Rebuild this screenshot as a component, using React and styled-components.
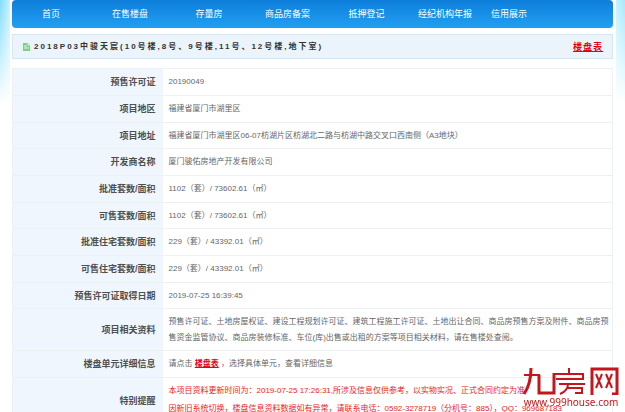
import React from 'react';
import styled, { createGlobalStyle } from 'styled-components';

const GlobalStyle = createGlobalStyle`
  * { box-sizing: border-box; }
  body {
    margin: 0;
    background: #fff;
    color: #666;
    font: 8px/16px "Liberation Sans", "Noto Sans CJK SC", sans-serif;
  }
`;

const Page = styled.div`
  height: 100vh;
  overflow: hidden;
  padding: 0 9px 0 10px;
  background:
    linear-gradient(to bottom, transparent, #fff 104px),
    linear-gradient(to right, #7fdcfb, #c5f3fe 10px, #c5f3fe calc(100% - 9px), #a5e9fd);
`;

const Sheet = styled.main`
  min-height: 100%;
  padding: 0 3px 0 2px;
  background: #fff;
`;

const NavList = styled.ul`
  display: flex;
  height: 28px;
  margin: 0;
  padding: 0;
  list-style: none;
  border-radius: 4px;
  background: linear-gradient(#0d7edb, #22a0f1);
`;

const NavItem = styled.li`
  flex: ${(p) => p.$share} 1 0;
  text-align: center;
`;

const NavLink = styled.a`
  color: #fff;
  font-size: 9px;
  line-height: 28px;
  text-decoration: none;
  white-space: nowrap;
`;

const TitleBar = styled.header`
  display: flex;
  align-items: center;
  height: 25px;
  margin: 6px 0 9px;
  padding: 0 9px 0 10px;
  border: 1px solid #d6e7f3;
  background: #ebf4fb;
`;

const Title = styled.h1`
  flex: 1;
  margin: 0 0 0 3px;
  color: #333;
  font-size: 8px;
  letter-spacing: 2px;
`;

const SheetLink = styled.a`
  color: #e60012;
  font-size: ${(p) => (p.$spaced ? '9px' : '8px')};
  font-weight: bold;
  letter-spacing: ${(p) => (p.$spaced ? '1px' : 'normal')};
`;

const Details = styled.table`
  width: 100%;
  border-collapse: collapse;
  border: 1px solid #eef1f4;
`;

const Row = styled.tr`
  height: 27px;
  border-top: 1px solid #eef1f4;
  &:nth-child(3n) { height: 26px; }
`;

const Label = styled.th`
  width: 25%;
  padding: 0 7px;
  background: #eff6fe;
  color: #505050;
  font-size: 9px;
  text-align: right;
`;

const Value = styled.td`
  padding: ${(p) => (p.$tall ? '5px 3px 4px 6px' : '0 3px 0 6px')};
`;

const Notice = styled.p`
  margin: 0 0 2px;
  color: #ee2222;
  white-space: nowrap;
`;

const Watermark = styled.aside`
  position: fixed;
  right: 5px;
  bottom: 3px;
  display: flex;
  flex-direction: column;
  align-items: center;
  color: #c4161c;
  font: 10px/14px "Noto Sans", sans-serif;
`;

const navItems = [
  ['首页', 78], ['在售楼盘', 80], ['存量房', 78], ['商品房备案', 79],
  ['抵押登记', 79], ['经纪机构年报', 78], ['信用展示', 50],
];

const rows = [
  ['预售许可证', '20190049'],
  ['项目地区', '福建省厦门市湖里区'],
  ['项目地址', '福建省厦门市湖里区06-07枋湖片区枋湖北二路与枋湖中路交叉口西南侧（A3地块）'],
  ['开发商名称', '厦门骏佑房地产开发有限公司'],
  ['批准套数/面积', '1102（套）/ 73602.61（㎡）'],
  ['可售套数/面积', '1102（套）/ 73602.61（㎡）'],
  ['批准住宅套数/面积', '229（套）/ 43392.01（㎡）'],
  ['可售住宅套数/面积', '229（套）/ 43392.01（㎡）'],
  ['预售许可证取得日期', '2019-07-25 16:39:45'],
];

function DocumentIcon() {
  return (
    <svg width="8" height="8" viewBox="0 0 8 8" aria-hidden="true">
      <path d="M0 0h5l2 2v6H0z" fill="#7bcf86" />
      <path d="M5 0v2h2M1 3h3M1 5h5" stroke="#e4f7e6" fill="none" />
    </svg>
  );
}

function SiteLogo() {
  return (
    <svg width="98" height="28" viewBox="0 0 98 28" role="img" aria-label="九房网" fill="none" stroke="#c4161c" strokeWidth="3">
      <path d="M9 1C9 12 7 20 2 27M17 8v18h15V6" />
      <path d="M2 8h16M32 7h29v5H34M47 1v6M37 17h26M46 17c0 5-3 8-8 10M45 21h15v5h-7" strokeWidth="2" />
      <path d="M70 28V2h25v25h-5" />
      <path d="M74 7l6 14M80 7l-6 14M84 7l6 14M90 7l-6 14" strokeWidth="2" />
    </svg>
  );
}

export default function App() {
  return (
    <>
      <GlobalStyle />
      <Page>
        <Sheet>
          <nav>
            <NavList>
              {navItems.map(([name, share]) => (
                <NavItem key={name} $share={share}><NavLink href="#">{name}</NavLink></NavItem>
              ))}
              <NavItem $share={79} />
            </NavList>
          </nav>
          <TitleBar>
            <DocumentIcon />
            <Title>2018P03中骏天宸(10号楼,8号、9号楼,11号、12号楼,地下室)</Title>
            <SheetLink href="#" $spaced>楼盘表</SheetLink>
          </TitleBar>
          <Details>
            <tbody>
              {rows.map(([label, value]) => (
                <Row key={label}>
                  <Label scope="row">{label}</Label>
                  <Value>{value}</Value>
                </Row>
              ))}
              <Row>
                <Label scope="row">项目相关资料</Label>
                <Value $tall>预售许可证、土地房屋权证、建设工程规划许可证、建筑工程施工许可证、土地出让合同、商品房预售方案及附件、商品房预售资金监管协议、商品房装修标准、车位(库)出售或出租的方案等项目相关材料，请在售楼处查阅。</Value>
              </Row>
              <Row>
                <Label scope="row">楼盘单元详细信息</Label>
                <Value>请点击 <SheetLink href="#">楼盘表</SheetLink> ，选择具体单元，查看详细信息</Value>
              </Row>
              <Row>
                <Label scope="row">特别提醒</Label>
                <Value $tall>
                  <Notice>本项目资料更新时间为：2019-07-25 17:26:31,所涉及信息仅供参考，以实物实况、正式合同约定为准</Notice>
                  <Notice>因新旧系统切换，楼盘信息资料数据如有异常，请联系电话：0592-3278719（分机号：885），QQ：969687183</Notice>
                </Value>
              </Row>
            </tbody>
          </Details>
        </Sheet>
        <Watermark>
          <SiteLogo />
          <span>www.999house.com</span>
        </Watermark>
      </Page>
    </>
  );
}
